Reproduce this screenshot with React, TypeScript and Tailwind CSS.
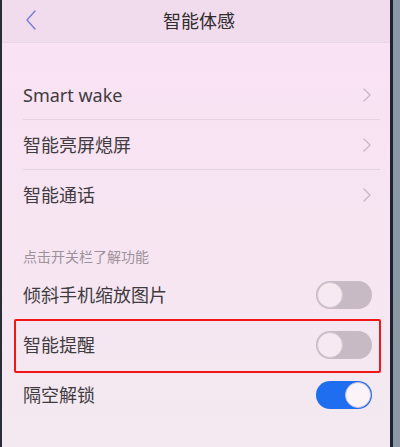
import React from "react";

const font = { fontFamily: '"Noto Sans", "Noto Sans CJK SC", sans-serif' };

function Chevron() {
  return (
    <svg width="10" height="16" viewBox="0 0 10 16" className="shrink-0">
      <path d="M2 2 L8 8 L2 14" fill="none" stroke="#c6b8c4" strokeWidth="1.4" strokeLinecap="round" strokeLinejoin="round" />
    </svg>
  );
}

function Toggle({ on }: { on: boolean }) {
  return on ? (
    <div className="w-[56px] h-[28px] rounded-full bg-[#1f6ef0] flex items-center justify-end p-[1px]">
      <div className="w-[26px] h-[26px] rounded-full bg-[#faf4f8] border border-[#c9bfd8]" />
    </div>
  ) : (
    <div className="w-[56px] h-[28px] rounded-full bg-[#c7bac5] flex items-center justify-start p-[1px]">
      <div className="w-[26px] h-[26px] rounded-full bg-[#f6e9f2] border border-[#d6c8d3]" />
    </div>
  );
}

function NavRow({ label, sep }: { label: string; sep: boolean }) {
  return (
    <div className="h-[50px] flex items-center pl-[21px] pr-[18px] relative">
      <span className="flex-1 text-[18px] text-[#403b40] leading-none">{label}</span>
      <Chevron />
      {sep && <div className="absolute left-[21px] right-[10px] bottom-0 h-px bg-[#e6d3e1]" />}
    </div>
  );
}

function ToggleRow({ label, on, boxed }: { label: string; on: boolean; boxed?: boolean }) {
  return (
    <div className="h-[50px] flex items-center pl-[21px] pr-[18px] relative">
      <span className="flex-1 text-[18px] text-[#403b40] leading-none">{label}</span>
      <Toggle on={on} />
      {boxed && (
        <div className="absolute left-[12px] right-[9px] top-[-1px] bottom-[-3px] border-2 border-[#f0161a] rounded-[2px]" />
      )}
    </div>
  );
}

export default function App() {
  return (
    <div className="w-[400px] h-[447px] overflow-hidden flex bg-[#8d9aa6]" style={font}>
      <div className="w-[2px] bg-[#2a2d36]" />
      <div className="w-[388px] flex flex-col bg-gradient-to-b from-[#f9e1f4] via-[#f7e5f2] to-[#f3e9f0]">
        <div className="h-[43px] shrink-0 flex items-center relative bg-[#f1dced] border-b border-[#ead6e6]">
          <svg width="14" height="22" viewBox="0 0 14 22" className="absolute left-[22px] top-[9px]">
            <path d="M11 2 L3 11 L11 20" fill="none" stroke="#7b80d6" strokeWidth="1.5" strokeLinecap="round" strokeLinejoin="round" />
          </svg>
          <div className="flex-1 text-center text-[18px] font-normal text-[#2f2c2f] pl-[6px]">智能体感</div>
        </div>
        <div className="h-[27px] shrink-0" />
        <NavRow label="Smart wake" sep />
        <NavRow label="智能亮屏熄屏" sep />
        <NavRow label="智能通话" sep={false} />
        <div className="h-[50px] shrink-0 flex items-end pl-[21px] pb-[4px]">
          <span className="text-[14px] text-[#9d929b] leading-none pb-[2px]">点击开关栏了解功能</span>
        </div>
        <ToggleRow label="倾斜手机缩放图片" on={false} />
        <ToggleRow label="智能提醒" on={false} boxed />
        <ToggleRow label="隔空解锁" on />
      </div>
      <div className="w-[3px] bg-[#1f2330]" />
      <div className="flex-1 bg-[#8a98a6]" />
    </div>
  );
}
